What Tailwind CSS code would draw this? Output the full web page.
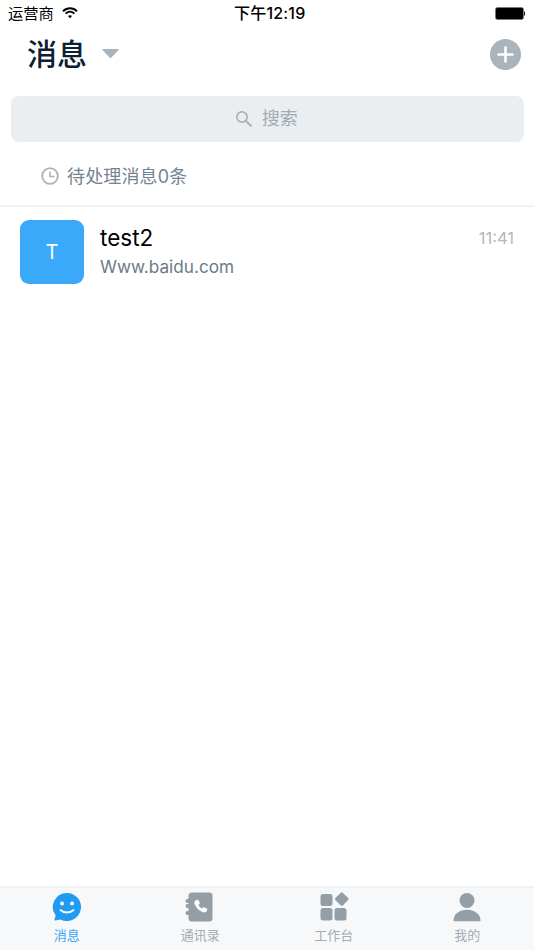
<!DOCTYPE html>
<html lang="zh">
<head>
<meta charset="utf-8">
<script src="https://cdn.jsdelivr.net/npm/@tailwindcss/browser@4"></script>
</head>
<body class="bg-white">
<div class="w-[534px] h-[950px] flex flex-col overflow-hidden font-['Inter','Noto_Sans_CJK_SC',sans-serif]">
  <div class="h-[27px] flex items-center justify-between relative pl-[8px] pr-[9px] text-black">
    <div class="flex items-center gap-[8px]">
      <span class="text-[15.300px] leading-[27px]">运营商</span>
      <svg width="16" height="12" viewBox="0 0 16 12" class="mb-[2px]"><path d="M1 4.200C5 .3 11 .3 15 4.200" fill="none" stroke="#000" stroke-width="1.900"/><path d="M3.600 6.600C6.200 4.200 9.800 4.200 12.400 6.600" fill="none" stroke="#000" stroke-width="1.900"/><path d="M6 9c1.200-1 2.800-1 4 0l-2 2.200z" fill="#000"/></svg>
    </div>
    <span class="absolute left-[234px] top-0 text-[16px] tracking-[0.2px] leading-[27px] font-medium">下午12:19</span>
    <svg width="30" height="13" viewBox="0 0 30 13"><rect x=".5" y=".5" width="28" height="12" rx="2" fill="#000" stroke="#777" stroke-width=".7"/><rect x="29" y="4.500" width="1.300" height="4" fill="#222"/></svg>
  </div>
  <div class="h-[55px] flex items-center justify-between pl-[27px] pr-[13px]">
    <div class="flex items-center gap-[15px]">
      <span class="text-[30px] leading-[55px] font-medium text-[#0c2033]">消息</span>
      <svg width="17" height="11" viewBox="0 0 17 11" class="mb-[2px]"><path d="M1 1h15a.7.7 0 0 1 .5 1.100L9.200 9.800a1 1 0 0 1-1.400 0L.5 2.100A.7.7 0 0 1 1 1z" fill="#a9b3bc"/></svg>
    </div>
    <div class="w-[31px] h-[31px] rounded-full bg-[#a9b4bd] flex items-center justify-center">
      <svg width="17" height="17" viewBox="0 0 17 17"><path d="M8.500 1.500v14M1.500 8.500h14" stroke="#fff" stroke-width="2.600" stroke-linecap="round"/></svg>
    </div>
  </div>
  <div class="pl-[11px] pr-[10.500px] pt-[14px]">
    <div class="h-[46px] rounded-[8px] bg-[#ebeef1] flex items-center justify-center gap-[10px] pr-[2px]">
      <svg width="17" height="17" viewBox="0 0 17 17" class="mb-[2px]"><circle cx="7" cy="7" r="5.200" fill="none" stroke="#aab2b9" stroke-width="1.700"/><path d="M11 11l5 5" stroke="#aab2b9" stroke-width="1.900" stroke-linecap="round"/></svg>
      <span class="text-[18px] leading-[24px] mb-[1px] text-[#a3abb3]">搜索</span>
    </div>
  </div>
  <div class="h-[65px] flex items-center gap-[8px] pl-[41px] pt-[5px] border-b-2 border-[#f1f2f4]">
    <svg width="18" height="18" viewBox="0 0 18 18"><circle cx="9" cy="9" r="7.800" fill="none" stroke="#a9b3bb" stroke-width="1.800"/><path d="M9 4.500V9.500H13.500" fill="none" stroke="#a9b3bb" stroke-width="1.600"/></svg>
    <span class="text-[18px] tracking-[0.15px] text-[#76838f]">待处理消息0条</span>
  </div>
  <div class="h-[78px] flex gap-[16px] pl-[20px] pr-[20px] pt-[13px]">
    <div class="w-[64px] h-[64px] rounded-[9px] bg-[#3aa9fa] flex items-center justify-center text-white text-[20px]">T</div>
    <div class="flex-1">
      <div class="flex justify-between items-center h-[36px]">
        <span class="text-[22.500px] text-black">test2</span>
        <span class="text-[16.500px] text-[#b2b8be]">11:41</span>
      </div>
      <div class="text-[17.200px] leading-[21px] text-[#6c7a87]">Www.baidu.com</div>
    </div>
  </div>
  <div class="flex-1"></div>
  <div class="h-[64px] bg-[#f7f8fa] border-t-2 border-[#f0f1f3] grid grid-cols-4">
    <div class="flex flex-col items-center pt-[4px]">
      <svg width="30" height="30" viewBox="0 0 30 30"><path d="M15 1a14 14 0 1 1-6.500 26.400L3.500 28.500a.8.8 0 0 1-1-1l1.200-4A14 14 0 0 1 15 1z" fill="#1f9bf4"/><circle cx="10" cy="11.500" r="2" fill="#fff"/><circle cx="20" cy="11.500" r="2" fill="#fff"/><path d="M8.500 18c3.500 3.300 9.500 3.300 13 0" fill="none" stroke="#fff" stroke-width="1.800" stroke-linecap="round"/></svg>
      <span class="text-[13px] leading-[18px] mt-[4px] text-[#3aa5f5]">消息</span>
    </div>
    <div class="flex flex-col items-center pt-[4px]">
      <svg width="30" height="30" viewBox="0 0 30 30"><path d="M3.500 3a3 3 0 0 1 3-2.500h18a3 3 0 0 1 3 3v23a3 3 0 0 1-3 3H6.500a3 3 0 0 1-3-2.500V23H2.500a2 2 0 0 1 0-4h1v-3H2.500a2 2 0 0 1 0-4h1V11H2.500a2 2 0 0 1 0-4h1z" fill="#939ea6"/><path d="M10.500 8.500l2.500-1 2 4-1.500 1.500c.8 1.700 1.800 2.700 3.500 3.500l1.500-1.500 4 2-1 2.500c-1 1-2.500 1.200-4 .5-4-1.800-6.500-4.500-8-8-.4-1-.2-2.500 1-3.500z" fill="#fff"/></svg>
      <span class="text-[13px] leading-[18px] mt-[4px] text-[#a3abb3]">通讯录</span>
    </div>
    <div class="flex flex-col items-center pt-[4px]">
      <svg width="30" height="30" viewBox="0 0 30 30" fill="#939ea6"><rect x="1.500" y="2" width="12" height="12" rx="2.500"/><rect x="17.500" y="1.800" width="10.500" height="10.500" rx="1.800" transform="rotate(45 22.750 7.050)"/><rect x="1.500" y="16" width="12" height="12.500" rx="2.500"/><rect x="15.500" y="16" width="12" height="12.500" rx="2.500"/></svg>
      <span class="text-[13px] leading-[18px] mt-[4px] text-[#a3abb3]">工作台</span>
    </div>
    <div class="flex flex-col items-center pt-[4px]">
      <svg width="30" height="30" viewBox="0 0 30 30" fill="#939ea6"><circle cx="15" cy="8.500" r="7.500"/><path d="M1.500 28.500C1.500 22 7.500 17.800 15 17.800s13.500 4.200 13.500 10.700c0 .5-.3.700-.8.700H2.300c-.5 0-.8-.2-.8-.7z"/></svg>
      <span class="text-[13px] leading-[18px] mt-[4px] text-[#a3abb3]">我的</span>
    </div>
  </div>
</div>
</body>
</html>
